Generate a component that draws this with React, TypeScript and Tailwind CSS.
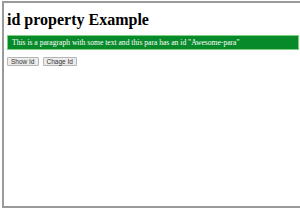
export default function App() {
  return (
    <div className="h-[210px] w-[300px] overflow-hidden bg-white">
      <div className="ml-[2px] mt-[1px] h-[207px] w-[298px] border-b-2 border-l-2 border-t-2 border-[#9a9a9a] bg-white pl-[3px] pt-[7px]">
        <h1 className="text-[16px] font-bold leading-[19px] text-black [font-family:'Liberation_Serif',serif]">
          id property Example
        </h1>
        <p className="mt-[6px] h-[15px] w-[292px] border border-[#7fd07f] bg-[#078a2a] pl-[4px] text-[7.6px] leading-[13px] text-white [font-family:'Liberation_Serif',serif]">
          This is a paragraph with some text and this para has an id "Awesome-para"
        </p>
        <div className="mt-[7px] flex gap-[4px] [font-family:'Liberation_Sans',sans-serif]">
          <button className="h-[9px] rounded-[1px] border border-[#b5b5b5] bg-[#ececec] px-[3px] text-[6.5px] leading-[7px] text-[#333]">
            Show Id
          </button>
          <button className="h-[9px] rounded-[1px] border border-[#b5b5b5] bg-[#ececec] px-[3px] text-[6.5px] leading-[7px] text-[#333]">
            Chage Id
          </button>
        </div>
      </div>
    </div>
  );
}
